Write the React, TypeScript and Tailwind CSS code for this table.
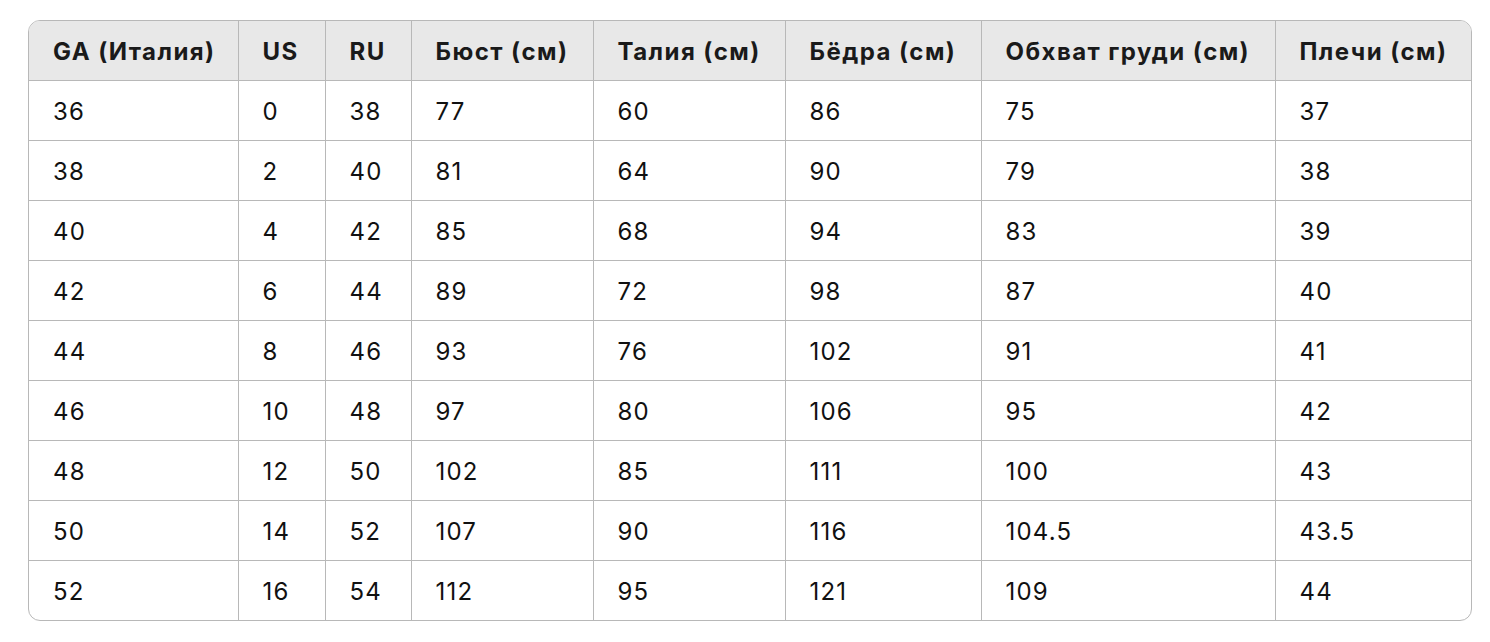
const HEADERS = [
  'GA (Италия)',
  'US',
  'RU',
  'Бюст (см)',
  'Талия (см)',
  'Бёдра (см)',
  'Обхват груди (см)',
  'Плечи (см)',
]

const WIDTHS = ['w-[209px]', 'w-[87px]', 'w-[86px]', 'w-[182px]', 'w-[192px]', 'w-[196px]', 'w-[294px]', 'w-[198px]']

const ROWS = [
  ['36', '0', '38', '77', '60', '86', '75', '37'],
  ['38', '2', '40', '81', '64', '90', '79', '38'],
  ['40', '4', '42', '85', '68', '94', '83', '39'],
  ['42', '6', '44', '89', '72', '98', '87', '40'],
  ['44', '8', '46', '93', '76', '102', '91', '41'],
  ['46', '10', '48', '97', '80', '106', '95', '42'],
  ['48', '12', '50', '102', '85', '111', '100', '43'],
  ['50', '14', '52', '107', '90', '116', '104.5', '43.5'],
  ['52', '16', '54', '112', '95', '121', '109', '44'],
]

export default function App() {
  return (
    <div className="min-h-[642px] w-[1490px] bg-white pt-[20px] pl-[28px] font-['Inter','Liberation_Sans',sans-serif]">
      <div className="w-[1444px] overflow-hidden rounded-[12px] border border-[#b8b8b8]">
        <table className="w-full table-fixed border-collapse text-[24px] text-[#111]">
          <colgroup>
            {WIDTHS.map((w, i) => (
              <col key={i} className={w} />
            ))}
          </colgroup>
          <thead className="bg-[#e8e8e8]">
            <tr className="h-[59px]">
              {HEADERS.map((h, i) => (
                <th
                  key={h}
                  className={`whitespace-nowrap px-6 pt-[3px] text-left font-bold tracking-[0.06em] text-[#1a1a1a] ${i > 0 ? 'border-l border-[#b8b8b8]' : ''}`}
                >
                  {h}
                </th>
              ))}
            </tr>
          </thead>
          <tbody>
            {ROWS.map((row, r) => (
              <tr key={r} className="h-[60px] border-t border-[#b8b8b8]">
                {row.map((cell, i) => (
                  <td
                    key={i}
                    className={`px-6 pt-[3px] tracking-[0.05em] ${i > 0 ? 'border-l border-[#b8b8b8]' : ''}`}
                  >
                    {cell}
                  </td>
                ))}
              </tr>
            ))}
          </tbody>
        </table>
      </div>
    </div>
  )
}
